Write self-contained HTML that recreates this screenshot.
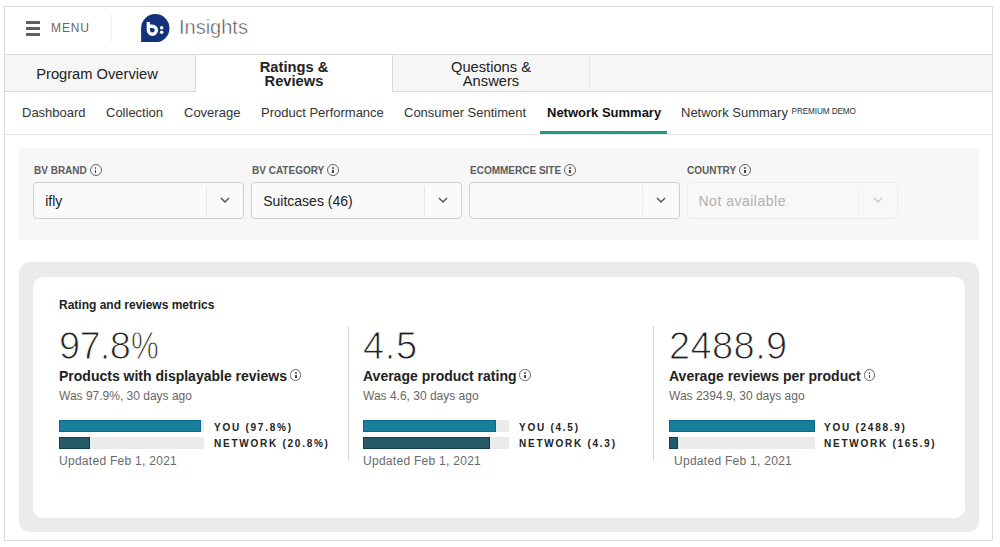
<!DOCTYPE html>
<html><head><meta charset="utf-8">
<style>
*{box-sizing:border-box;margin:0;padding:0}
html,body{width:1000px;height:547px;background:#fff;overflow:hidden;font-family:"Liberation Sans",sans-serif;color:#222}
.abs{position:absolute}
#frame{position:absolute;left:4px;top:6px;width:989px;height:535px;border:1px solid #dcdcdc;background:#fff}
.t{position:absolute;white-space:nowrap;line-height:1}
/* header */
.hb{position:absolute;left:26px;width:14px;height:2.8px;background:#606060;border-radius:0.5px}
/* tabs */
#tabbar{position:absolute;left:5px;top:54px;width:987px;height:38px;background:#f6f6f6;border-top:1px solid #d8d8d8;border-bottom:1px solid #d8d8d8}
.tab{position:absolute;top:54px;height:38px;text-align:center;font-size:14.7px;color:#222;line-height:14px}
/* subnav */
.sn{position:absolute;top:106px;font-size:13px;color:#333;line-height:13px;white-space:nowrap}
/* filters */
#filters{position:absolute;left:19px;top:148px;width:960px;height:92px;background:#f7f7f7}
.lbl{position:absolute;top:165px;font-size:10px;font-weight:bold;color:#5c5c5c;line-height:10px;white-space:nowrap;letter-spacing:0}
.info{display:inline-block;width:12px;height:12px;border:1px solid #666;border-radius:50%;vertical-align:middle;position:relative;top:-0.8px}
.info:before{content:"";position:absolute;left:4.2px;top:2.2px;width:1.7px;height:1.7px;background:#444;border-radius:1px}
.info:after{content:"";position:absolute;left:4.2px;top:4.6px;width:1.7px;height:3.6px;background:#444}
.thin{-webkit-text-stroke:0.35px #fff}
.mt .info{top:-2.5px;margin-left:-1px;width:11.5px;height:11.5px}
.mt .info:before,.mt .info:after{left:4px}
.thin2{-webkit-text-stroke:1px #fff}
.sel{position:absolute;top:182px;width:211px;height:37px;border:1px solid #cfcfcf;border-radius:4px;background:#fafafa}
.sel .div{position:absolute;right:36px;top:3px;width:1px;height:29px;background:#e8e8e8}
.sel .txt{position:absolute;left:11.2px;top:11px;font-size:14px;color:#222;line-height:14px;white-space:nowrap}
.chev{position:absolute;right:13px;top:13px;width:10px;height:8px}
/* metrics */
#mouter{position:absolute;left:19px;top:262px;width:960px;height:270px;background:#ebebeb;border-radius:11px}
#minner{position:absolute;left:33px;top:277px;width:932px;height:241px;background:#fff;border-radius:10px}
.big{position:absolute;top:327.5px;font-size:38px;color:#222;line-height:37px;font-weight:normal;white-space:nowrap}
.mt{position:absolute;top:369px;font-size:14px;font-weight:bold;color:#222;line-height:14px;white-space:nowrap}
.was{position:absolute;top:390px;font-size:12px;color:#666;line-height:12px;white-space:nowrap}
.upd{position:absolute;top:455px;font-size:12px;color:#6a6a6a;letter-spacing:0.28px;line-height:12px;white-space:nowrap}
.track{position:absolute;height:12px;background:#ebebeb}
.you{position:absolute;left:0;top:0;height:12px;background:#167d9b;box-shadow:inset 0 0 0 1px #0b6a89}
.net{position:absolute;left:0;top:0;height:12px;background:#255a68;box-shadow:inset 0 0 0 1px #123f50}
.bl{position:absolute;margin-top:1.5px;font-size:10px;font-weight:bold;letter-spacing:1.75px;color:#222;line-height:10px;white-space:nowrap}
.vdiv{position:absolute;top:326px;width:1px;height:135px;background:#d6d6d6}
</style></head><body>
<div id="frame"></div>

<!-- header -->
<div class="hb" style="top:21.2px"></div>
<div class="hb" style="top:27.4px"></div>
<div class="hb" style="top:33.2px"></div>
<div class="t" style="left:51px;top:22px;font-size:12px;letter-spacing:0.9px;color:#666">MENU</div>
<div class="abs" style="left:111px;top:14px;width:1px;height:28px;background:#eee"></div>
<svg class="abs" style="left:141px;top:13.5px" width="28.6" height="28.4" viewBox="0 0 29 29">
  <path d="M14.5 0 A14.5 14.5 0 0 1 29 14.5 A14.5 14.5 0 0 1 14.5 29 L0 29 L0 14.5 A14.5 14.5 0 0 1 14.5 0Z" fill="#14327b"/>
  <path d="M7.4 8.2 V16.6 A4.1 4.1 0 1 0 11.5 12.5 H7.6" fill="none" stroke="#fff" stroke-width="3.4" stroke-linecap="butt" stroke-linejoin="round"/>
  <circle cx="21" cy="14" r="1.8" fill="#fff"/><circle cx="21" cy="18.6" r="1.8" fill="#fff"/>
</svg>
<div class="t thin" style="left:179px;top:17px;font-size:20px;color:#4a4a4a;-webkit-text-stroke:0.5px #fff">Insights</div>

<!-- tabs -->
<div id="tabbar"></div>
<div class="tab" style="left:5px;width:191px;border-right:1px solid #d8d8d8;top:55px;height:36px;padding-top:12px;padding-right:6px;background:#f6f6f6">Program Overview</div>
<div class="tab" style="left:196px;width:196px;background:#fff;top:55px;height:37px;font-weight:bold;padding-top:5px">Ratings &amp;<br>Reviews</div>
<div class="tab" style="left:392px;width:198px;border-left:1px solid #d8d8d8;border-right:1px solid #e8e8e8;top:55px;height:36px;padding-top:5px">Questions &amp;<br>Answers</div>

<!-- subnav -->
<div class="abs" style="left:5px;top:134px;width:987px;height:1px;background:#e6e6e6"></div>
<div class="sn" style="left:22px">Dashboard</div>
<div class="sn" style="left:106px">Collection</div>
<div class="sn" style="left:184px">Coverage</div>
<div class="sn" style="left:261px">Product Performance</div>
<div class="sn" style="left:404px">Consumer Sentiment</div>
<div class="sn" style="left:547px;font-weight:bold;color:#111">Network Summary</div>
<div class="abs" style="left:540px;top:131px;width:127px;height:3px;background:#1a9c82"></div>
<div class="sn" style="left:681px">Network Summary <span style="font-size:8.2px;position:relative;top:-3.3px;line-height:0;letter-spacing:-0.1px">PREMIUM DEMO</span></div>

<!-- filters -->
<div id="filters"></div>
<div class="lbl" style="left:34px">BV BRAND <span class="info"></span></div>
<div class="lbl" style="left:252px">BV CATEGORY <span class="info"></span></div>
<div class="lbl" style="left:470px">ECOMMERCE SITE <span class="info"></span></div>
<div class="lbl" style="left:687px">COUNTRY <span class="info"></span></div>
<div class="sel" style="left:33px"><div class="txt">ifly</div><div class="div"></div><svg class="chev" viewBox="0 0 10 8"><path d="M1 2 L5 6 L9 2" fill="none" stroke="#555" stroke-width="1.5"/></svg></div>
<div class="sel" style="left:251px"><div class="txt">Suitcases (46)</div><div class="div"></div><svg class="chev" viewBox="0 0 10 8"><path d="M1 2 L5 6 L9 2" fill="none" stroke="#555" stroke-width="1.5"/></svg></div>
<div class="sel" style="left:469px"><div class="txt"></div><div class="div"></div><svg class="chev" viewBox="0 0 10 8"><path d="M1 2 L5 6 L9 2" fill="none" stroke="#555" stroke-width="1.5"/></svg></div>
<div class="sel" style="left:687px;border-color:#ececec;background:#f8f8f8"><div class="txt" style="color:#b0b0b0;letter-spacing:0.5px;left:10.5px">Not available</div><div class="div" style="background:#f1f1f1;right:38px"></div><svg class="chev" style="right:14px" viewBox="0 0 10 8"><path d="M1 2 L5 6 L9 2" fill="none" stroke="#c8c8c8" stroke-width="1.5"/></svg></div>

<!-- metrics -->
<div id="mouter"></div>
<div id="minner"></div>
<div class="t" style="left:59px;top:299px;font-size:12px;font-weight:bold;color:#222">Rating and reviews metrics</div>


<!-- col1 -->
<div class="big thin2" style="left:59px;letter-spacing:-0.7px">97.8<span style="display:inline-block;transform:scaleX(0.82);transform-origin:0 0;margin-left:0.5px">%</span></div>
<div class="mt" style="left:59px">Products with displayable reviews <span class="info"></span></div>
<div class="was" style="left:59px">Was 97.9%, 30 days ago</div>
<div class="track" style="left:59px;top:420px;width:145px"><div class="you" style="width:142px"></div></div>
<div class="track" style="left:59px;top:436.5px;width:145px"><div class="net" style="width:31px"></div></div>
<div class="bl" style="left:214px;top:421px">YOU (97.8%)</div>
<div class="bl" style="left:214px;top:437px">NETWORK (20.8%)</div>
<div class="upd" style="left:59px">Updated Feb 1, 2021</div>
<div class="vdiv" style="left:348px"></div>
<!-- col2 -->
<div class="big thin2" style="left:363px;letter-spacing:0.6px">4.5</div>
<div class="mt" style="left:363px">Average product rating <span class="info"></span></div>
<div class="was" style="left:363px">Was 4.6, 30 days ago</div>
<div class="track" style="left:363px;top:420px;width:146px"><div class="you" style="width:133px"></div></div>
<div class="track" style="left:363px;top:436.5px;width:146px"><div class="net" style="width:127px"></div></div>
<div class="bl" style="left:519px;top:421px">YOU (4.5)</div>
<div class="bl" style="left:519px;top:437px">NETWORK (4.3)</div>
<div class="upd" style="left:363px">Updated Feb 1, 2021</div>
<div class="vdiv" style="left:653px"></div>
<!-- col3 -->
<div class="big thin2" style="left:669px;letter-spacing:0.4px">2488.9</div>
<div class="mt" style="left:669px">Average reviews per product <span class="info"></span></div>
<div class="was" style="left:669px">Was 2394.9, 30 days ago</div>
<div class="track" style="left:669px;top:420px;width:146px"><div class="you" style="width:146px"></div></div>
<div class="track" style="left:669px;top:436.5px;width:146px"><div class="net" style="width:9px"></div></div>
<div class="bl" style="left:824px;top:421px">YOU (2488.9)</div>
<div class="bl" style="left:824px;top:437px">NETWORK (165.9)</div>
<div class="upd" style="left:674px">Updated Feb 1, 2021</div>
</body></html>
